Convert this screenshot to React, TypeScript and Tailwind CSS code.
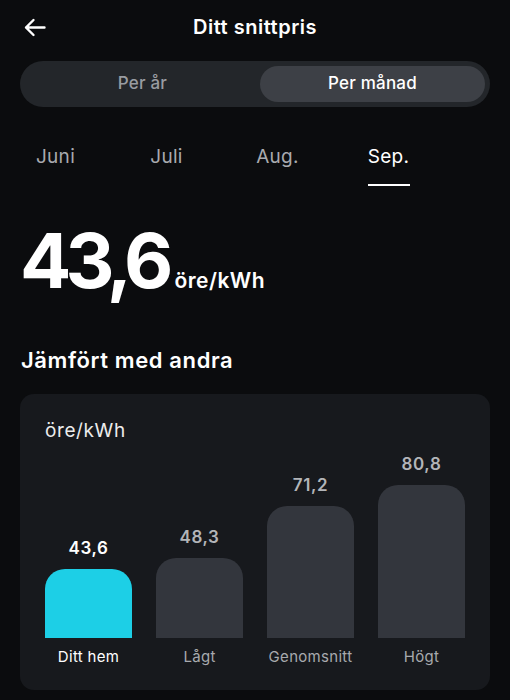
import { useState } from 'react'

const months = ['Juni', 'Juli', 'Aug.', 'Sep.']

const bars = [
  { label: 'Ditt hem', value: '43,6', height: 69, mine: true },
  { label: 'Lågt', value: '48,3', height: 80, mine: false },
  { label: 'Genomsnitt', value: '71,2', height: 132, mine: false },
  { label: 'Högt', value: '80,8', height: 153, mine: false },
]

export default function App() {
  const [period, setPeriod] = useState<'year' | 'month'>('month')
  const [month, setMonth] = useState(3)

  return (
    <div className="w-[510px] h-[700px] overflow-hidden bg-[#0b0c0e] text-white font-['Inter',sans-serif]">
      {/* Header */}
      <div className="relative flex h-[54px] items-center justify-center">
        <button className="absolute left-[24px] top-[18px]">
          <svg width="22" height="19" viewBox="0 0 22 19" fill="none" stroke="white" strokeWidth="2.4" strokeLinecap="round" strokeLinejoin="round">
            <path d="M20.5 9.5H2M9.5 2L2 9.5L9.5 17" />
          </svg>
        </button>
        <h1 className="text-[20px] font-semibold leading-none tracking-[0.5px]">Ditt snittpris</h1>
      </div>

      {/* Period toggle */}
      <div className="mx-[20px] mt-[7px] flex h-[46px] rounded-full bg-[#23262a] p-[5px]">
        <button
          onClick={() => setPeriod('year')}
          className={`flex flex-1 items-center justify-center rounded-full text-[17px] font-medium tracking-[0.2px] ${period === 'year' ? 'bg-[#3d4046] text-white' : 'text-[#999ca1]'}`}
        >
          Per år
        </button>
        <button
          onClick={() => setPeriod('month')}
          className={`flex w-[225px] items-center justify-center rounded-full text-[17px] font-medium tracking-[0.2px] ${period === 'month' ? 'bg-[#3d4046] text-white' : 'text-[#999ca1]'}`}
        >
          Per månad
        </button>
      </div>

      {/* Months */}
      <div className="mt-[36px] grid grid-cols-[111px_111px_111px_111px]">
        {months.map((m, i) => (
          <button key={m} onClick={() => setMonth(i)} className="flex flex-col items-center">
            <span className={`text-[19px] leading-[28px] tracking-[0.3px] ${i === month ? 'text-white' : 'text-[#a8aaae]'}`}>{m}</span>
            <span className={`mt-[13px] h-[2px] w-[42px] ${i === month ? 'bg-white' : 'bg-transparent'}`} />
          </button>
        ))}
      </div>

      {/* Big number */}
      <div className="mt-[36px] flex items-baseline gap-[7px] px-[20px]">
        <span className="text-[76px] font-bold leading-[76px] tracking-[-6px]">43,6</span>
        <span className="text-[21px] font-semibold tracking-[0.5px]">öre/kWh</span>
      </div>

      <h2 className="mt-[48px] px-[21px] text-[22px] font-semibold leading-[28px] tracking-[0.6px]">Jämfört med andra</h2>

      {/* Comparison card */}
      <div className="mx-[20px] mt-[20px] flex h-[296px] flex-col rounded-[14px] bg-[#17191d] px-[25px] pt-[25px] pb-[22px]">
        <div className="text-[19px] leading-[24px] tracking-[0.6px] text-[#ececec]">öre/kWh</div>
        <div className="mt-auto flex items-end gap-[24px]">
          {bars.map(b => (
            <div key={b.label} className="flex w-[87px] flex-col items-center">
              <span className={`mb-[10px] text-[17px] font-semibold leading-[22px] tracking-[0.6px] ${b.mine ? 'text-white' : 'text-[#b3b5b9]'}`}>
                {b.value}
              </span>
              <div
                className={`w-full rounded-t-[20px] ${b.mine ? 'bg-[#1dcfe6]' : 'bg-[#33363d]'}`}
                style={{ height: b.height }}
              />
              <span className={`mt-[8px] text-[15px] leading-[22px] tracking-[0.3px] ${b.mine ? 'text-white' : 'text-[#a8aaae]'}`}>
                {b.label}
              </span>
            </div>
          ))}
        </div>
      </div>
    </div>
  )
}
